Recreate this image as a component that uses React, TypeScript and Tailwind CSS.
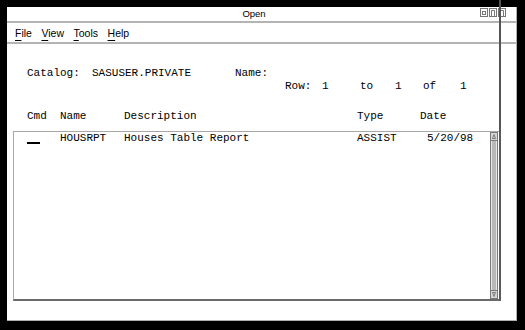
import React from "react";

function TitleIcons() {
  return (
    <div className="flex gap-[1px] mt-[1px]">
      <svg width="8" height="9" viewBox="0 0 8 9">
        <rect x="0.5" y="0.5" width="7" height="8" fill="none" stroke="#777" />
        <rect x="2.5" y="3.5" width="3" height="3" fill="none" stroke="#777" />
      </svg>
      <svg width="8" height="9" viewBox="0 0 8 9">
        <rect x="0.5" y="0.5" width="7" height="8" fill="none" stroke="#777" />
        <path d="M2.5 8 V2.5 H5.5 V8" fill="none" stroke="#777" />
      </svg>
      <svg width="8" height="9" viewBox="0 0 8 9">
        <rect x="0.5" y="0.5" width="7" height="8" fill="none" stroke="#777" />
        <path d="M2.5 2.5 H5.5 V8" fill="none" stroke="#777" />
      </svg>
    </div>
  );
}

function Mnemonic({ first, rest }: { first: string; rest: string }) {
  return (
    <span>
      <span className="underline underline-offset-[3px] decoration-[1px]">{first}</span>
      {rest}
    </span>
  );
}

function ScrollBar() {
  return (
    <div className="w-[8px] h-full flex flex-col bg-[#c4c4c4] border border-[#7a7a7a]">
      <div className="h-[8px] border-b border-[#7a7a7a] bg-[#d6d6d6] flex items-center justify-center">
        <svg width="4" height="5" viewBox="0 0 4 5">
          <path d="M2 0.5 L3.5 4.5 H0.5 Z" fill="none" stroke="#666" strokeWidth="0.8" />
        </svg>
      </div>
      <div className="flex-1 border-x border-[#e8e8e8] bg-[#b8b8b8]" />
      <div className="h-[8px] border-t border-[#7a7a7a] bg-[#d6d6d6] flex items-center justify-center">
        <svg width="4" height="5" viewBox="0 0 4 5">
          <path d="M2 4.5 L3.5 0.5 H0.5 Z" fill="none" stroke="#666" strokeWidth="0.8" />
        </svg>
      </div>
    </div>
  );
}

export default function App() {
  return (
    <div className="w-[525px] h-[330px] bg-black pt-[7px] pl-[7px] relative overflow-hidden">
      <div className="w-[510px] h-[314px] bg-white border-r border-b border-[#b0b0b0] flex flex-col">
        {/* title bar */}
        <div className="h-[14px] flex items-start border-b-2 border-[#b4b4b4] box-content">
          <div className="w-[473px] flex justify-center pl-[21px] pt-[1px] font-['Liberation_Sans',Arial,sans-serif] text-[9.5px] leading-[12px] text-black">
            Open
          </div>
          <TitleIcons />
        </div>

        {/* menu bar */}
        <div className="h-[18px] flex items-center gap-[9.5px] pl-[8px] pt-[1px] border-b-2 border-[#b4b4b4] box-content font-['Liberation_Sans',Arial,sans-serif] text-[10.5px] leading-[12px] text-black">
          <Mnemonic first="F" rest="ile" />
          <Mnemonic first="V" rest="iew" />
          <Mnemonic first="T" rest="ools" />
          <Mnemonic first="H" rest="elp" />
        </div>

        {/* content */}
        <div className="flex-1 flex flex-col font-['Liberation_Mono','Courier_New',monospace] text-[11px] leading-[13px] text-black whitespace-pre">
          <div className="flex pl-[20px] mt-[23px]">
            <span className="w-[65px]">Catalog:</span>
            <span className="w-[143px]">SASUSER.PRIVATE</span>
            <span>Name:</span>
          </div>
          <div className="flex pl-[278px]">
            <span className="w-[37px]">Row:</span>
            <span className="w-[38px]">1</span>
            <span className="w-[35px]">to</span>
            <span className="w-[28px]">1</span>
            <span className="w-[37px]">of</span>
            <span>1</span>
          </div>
          <div className="flex pl-[20px] mt-[17px]">
            <span className="w-[33px]">Cmd</span>
            <span className="w-[64px]">Name</span>
            <span className="w-[233px]">Description</span>
            <span className="w-[63px]">Type</span>
            <span>Date</span>
          </div>

          <div className="ml-[6px] mt-[8px] w-[488px] h-[170px] flex border-t border-l border-[#a8a8a8] border-b-2 border-r-2 border-b-[#6a6a6a] border-r-[#5a5a5a]">
            <div className="flex-1">
              <div className="flex pl-[13px]">
                <span className="w-[33px] h-[13px]">
                  <span className="block mt-[10px] h-[2px] w-[13px] bg-black" />
                </span>
                <span className="w-[64px]">HOUSRPT</span>
                <span className="w-[233px]">Houses Table Report</span>
                <span className="w-[70px]">ASSIST</span>
                <span>5/20/98</span>
              </div>
            </div>
            <div className="pr-[1px] h-full">
              <ScrollBar />
            </div>
          </div>
        </div>
      </div>
      {/* stray vertical rule crossing the title and menu bars */}
      <div className="absolute left-[499px] top-0 w-[2px] h-[132px] bg-[#555]" />
    </div>
  );
}
